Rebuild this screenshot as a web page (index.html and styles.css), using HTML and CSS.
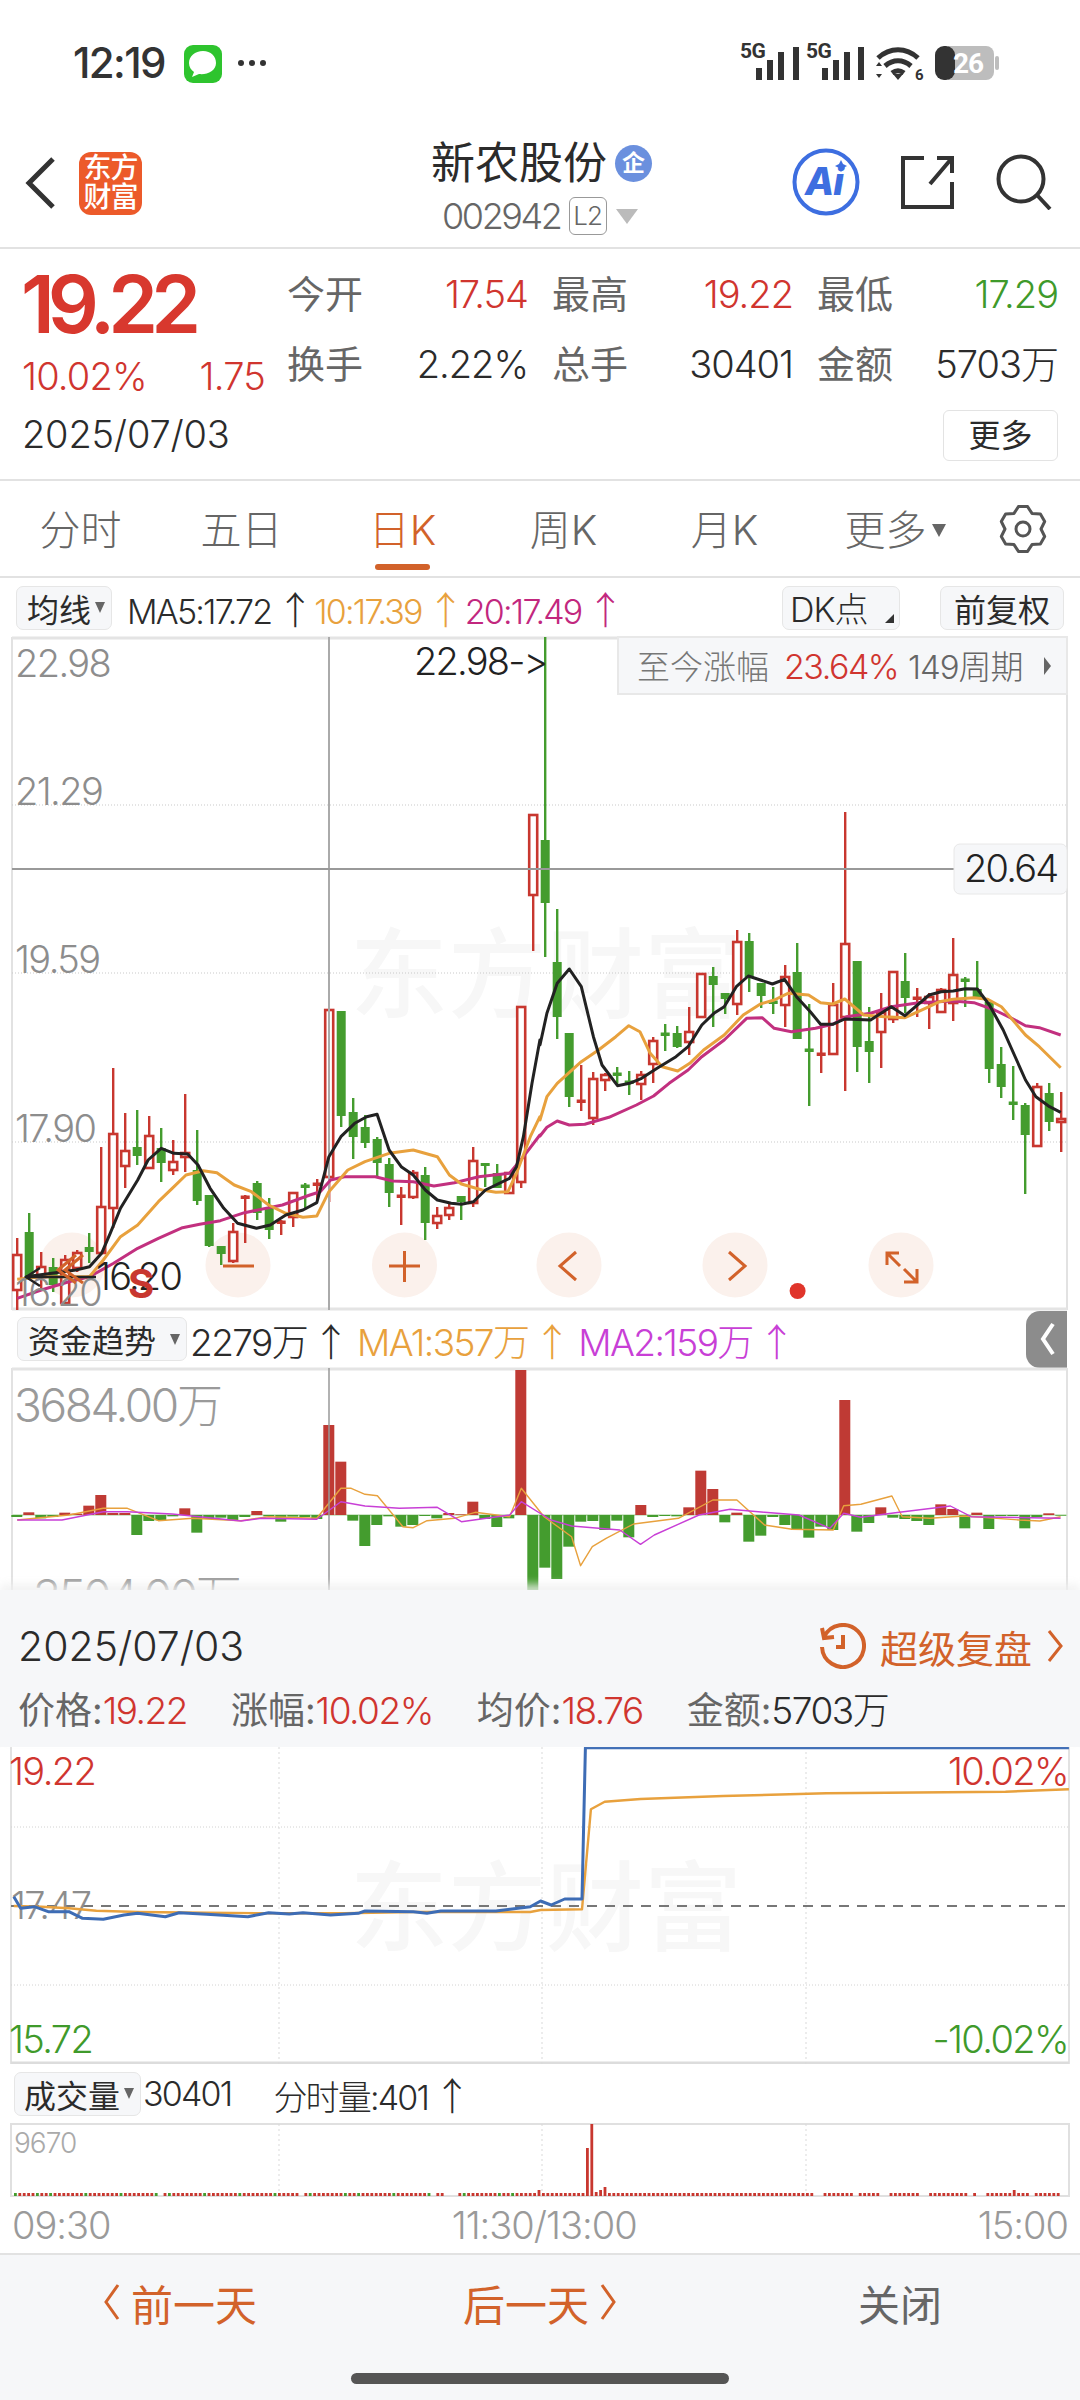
FILE: index.html
```html
<!DOCTYPE html>
<html lang="zh-CN">

<head>
    <meta charset="UTF-8">
    <title>新农股份 日K</title>
    <link rel="stylesheet" href="styles.css">
</head>

<body>
    <div class="status-bar">
        <div class="status-left">
            <span class="clock">12:19</span>
            <svg class="msg-icon" viewBox="0 0 38 38">
                <rect width="38" height="38" rx="9" fill="#2ec42e" />
                <path d="M19 6c-8 0-14 5-14 12 0 4 2 7 5 9l-2 5 7-3c8 1 17-3 17-11C32 11 27 6 19 6z" fill="#fff" />
            </svg>
            <span class="more-dots"><i></i><i></i><i></i></span>
        </div>
        <div class="status-right">
            <svg width="262" height="60" viewBox="0 -10 262 60">
                <text class="net" x="0" y="16">5G</text>
                <path d="M16 26h6v12h-6zM27 18h6v20h-6zM38 10h6v28h-6zM53 5h6v33h-6z" fill="#333" />
                <text class="net" x="66" y="16">5G</text>
                <path d="M82 26h6v12h-6zM93 18h6v20h-6zM104 10h6v28h-6zM118 5h6v33h-6z" fill="#333" />
                <path d="M138 16c12-11 28-11 40 0M145 24c8-7 18-7 26 0M152 31c4-3 8-3 12 0" fill="none" stroke="#333" stroke-width="5" />
                <path d="M153 32h10l-5 6zM136 24l3-4 3 4zM136 32l3 4 3-4z" fill="#333" />
                <text class="net small" x="175" y="38">6</text>
                <path d="M208 4h38a8 8 0 0 1 8 8v18a8 8 0 0 1-8 8h-38z" fill="#bdbdbd" />
                <rect x="195" y="4" width="20" height="34" rx="9" fill="#333" />
                <rect x="255" y="14" width="4" height="14" rx="2" fill="#bdbdbd" />
                <text class="batt" x="228" y="31">26</text>
            </svg>
        </div>
    </div>

    <div class="nav-bar">
        <div class="nav-left">
            <svg width="36" height="54" viewBox="0 0 36 54">
                <path d="M31 3L7 27l24 24" fill="none" stroke="#333" stroke-width="5" />
            </svg>
            <div class="app-logo">东方<br>财富</div>
        </div>
        <div class="nav-title">
            <div class="stock-name">新农股份<span class="ent-badge">企</span></div>
            <div class="stock-code">002942<span class="l2-tag">L2</span><span class="tri-down"></span></div>
        </div>
        <div class="nav-right">
            <svg width="68" height="68" viewBox="0 0 68 68">
                <circle cx="34" cy="34" r="31.5" fill="#fff" stroke="#3d6ee0" stroke-width="4" />
                <text class="ai-text" x="13" y="47">Ai</text>
                <path d="M49 12l2 4 4 2-4 2-2 4-2-4-4-2 4-2z" fill="#3d6ee0" />
            </svg>
            <svg width="54" height="54" viewBox="0 0 54 54">
                <path d="M23 3H2v49h49V27M29 29L51 3M36 3h15v15" fill="none" stroke="#333" stroke-width="4" />
            </svg>
            <svg width="56" height="56" viewBox="0 0 56 56">
                <circle cx="25" cy="25" r="22.5" fill="none" stroke="#333" stroke-width="4" />
                <path d="M41 41l13 14" stroke="#333" stroke-width="4" />
            </svg>
        </div>
    </div>

    <div class="quote">
        <div class="quote-left">
            <div class="price">19.22</div>
            <div class="change"><span>10.02%</span><span>1.75</span></div>
            <div class="quote-date">2025/07/03</div>
        </div>
        <div class="quote-right">
            <div class="stat-grid">
                <div class="stat"><span class="stat-label">今开</span><span class="up">17.54</span></div>
                <div class="stat"><span class="stat-label">最高</span><span class="up">19.22</span></div>
                <div class="stat"><span class="stat-label">最低</span><span class="down">17.29</span></div>
                <div class="stat"><span class="stat-label">换手</span><span>2.22%</span></div>
                <div class="stat"><span class="stat-label">总手</span><span>30401</span></div>
                <div class="stat"><span class="stat-label">金额</span><span>5703万</span></div>
            </div>
            <div class="more-btn">更多</div>
        </div>
    </div>

    <div class="tabs">
        <div class="tab">分时</div>
        <div class="tab">五日</div>
        <div class="tab active">日K</div>
        <div class="tab">周K</div>
        <div class="tab">月K</div>
        <div class="tab">更多<span class="tab-tri"></span></div>
        <div class="tab-gear">
            <svg width="48" height="48" viewBox="0 0 48 48">
                <path d="M19.6 1.4h8.8L33 8.4l8.4.5 4.3 7.6L42 24l3.7 7.5-4.3 7.6-8.4.5-4.6 7h-8.8l-4.6-7-8.4-.5-4.3-7.6L6 24l-3.7-7.5 4.3-7.6 8.4-.5z" fill="none" stroke="#555" stroke-width="3" stroke-linejoin="round" />
                <circle cx="24" cy="24" r="7" fill="none" stroke="#555" stroke-width="3" />
            </svg>
        </div>
    </div>

    <div class="legend legend-ma">
        <div class="pick">均线<span class="pick-tri"></span></div>
        <span class="ma-text">MA5:17.72<span class="arr">↑</span></span>
        <span class="ma-text orange">10:17.39<span class="arr">↑</span></span>
        <span class="ma-text pink">20:17.49<span class="arr">↑</span></span>
        <div class="legend-btns">
            <div class="pick pick-dk">DK点<span class="corner-tri"></span></div>
            <div class="pick pick-fq">前复权</div>
        </div>
    </div>

    <svg id="kline" class="chart chart-open" viewBox="0 637 1080 673" width="1080" height="673"></svg>

    <div class="legend legend-flow">
        <div class="pick pick-flow">资金趋势<span class="pick-tri"></span></div>
        <span class="ma-text">2279万<span class="arr">↑</span></span>
        <span class="ma-text orange">MA1:357万<span class="arr">↑</span></span>
        <span class="ma-text violet">MA2:159万<span class="arr">↑</span></span>
        <div class="side-handle">
            <svg width="18" height="34" viewBox="0 0 18 34">
                <path d="M15 2L5 17l10 15" fill="none" stroke="#fff" stroke-width="4" />
            </svg>
        </div>
    </div>

    <svg id="flow" class="chart chart-open" viewBox="0 1368 1080 222" width="1080" height="222"></svg>

    <div class="day-panel">
        <div class="day-head">
            <span class="day-date">2025/07/03</span>
            <div class="replay">
                <svg width="46" height="46" viewBox="0 0 46 46">
                    <path d="M4 14a21 21 0 1 1-2 10M2 5l2 10 10-1M23 12v12h-7" fill="none" stroke="#d2622a" stroke-width="4" />
                </svg>
                <span>超级复盘</span>
                <svg width="18" height="34" viewBox="0 0 18 34">
                    <path d="M3 2l12 15L3 32" fill="none" stroke="#d2622a" stroke-width="3" />
                </svg>
            </div>
        </div>
        <div class="day-stats">
            <span><b>价格:</b><em class="up">19.22</em></span>
            <span><b>涨幅:</b><em class="up">10.02%</em></span>
            <span><b>均价:</b><em class="up">18.76</em></span>
            <span><b>金额:</b><em>5703万</em></span>
        </div>
    </div>

    <svg id="minute" class="chart" viewBox="0 1747 1080 317" width="1080" height="317"></svg>

    <div class="legend legend-vol">
        <div class="pick pick-vol">成交量<span class="pick-tri"></span></div>
        <span class="ma-text">30401</span>
        <span class="ma-text vol-now">分时量:401<span class="arr">↑</span></span>
    </div>

    <svg id="volume" class="chart" viewBox="0 2123 1080 74" width="1080" height="74"></svg>

    <div class="time-axis">
        <span>09:30</span>
        <span>11:30/13:00</span>
        <span>15:00</span>
    </div>

    <div class="footer">
        <div class="footer-row">
            <div class="foot-btn">
                <svg width="18" height="38" viewBox="0 0 18 38"><path d="M15 2L3 19l12 17" fill="none" stroke="#d2622a" stroke-width="3" /></svg>
                前一天
            </div>
            <div class="foot-btn">
                后一天
                <svg width="18" height="38" viewBox="0 0 18 38"><path d="M3 2l12 17L3 36" fill="none" stroke="#d2622a" stroke-width="3" /></svg>
            </div>
            <div class="foot-btn foot-close">关闭</div>
        </div>
        <div class="home-bar"></div>
    </div>

    <script src="chart.js"></script>
</body>

</html>
```

FILE: styles.css
```css
* {
    box-sizing: border-box;
}

body {
    margin: 0;
    width: 1080px;
    height: 2400px;
    overflow: hidden;
    background-color: #fff;
    color: #2b2b2b;
    font-family: Inter, "Noto Sans CJK SC", sans-serif;
    font-size: 36px;
}

.up {
    color: #d0352f;
}

.down {
    color: #3f9a2b;
}

/* status bar */

.status-bar {
    height: 125px;
    padding: 45px 78px 0 73px;
    display: flex;
    justify-content: space-between;
}

.status-left {
    display: flex;
    align-items: flex-start;
}

.clock {
    font-size: 42px;
    font-weight: 500;
    line-height: 36px;
    letter-spacing: -1.6px;
    color: #333;
    width: 111px;
}

.msg-icon {
    width: 38px;
    height: 38px;
}

.more-dots {
    display: flex;
    gap: 5px;
    margin: 15px 0 0 16px;
}

.more-dots i {
    width: 6px;
    height: 6px;
    border-radius: 50%;
    background-color: #333;
}

.status-right {
    margin-top: -13px;
    height: 60px;
}

.net {
    font-family: Roboto, sans-serif;
    font-size: 21px;
    font-weight: 700;
    fill: #333;
    letter-spacing: -.5px;
}

.net.small {
    font-size: 15px;
}

.batt {
    font-family: Roboto, sans-serif;
    font-size: 28px;
    font-weight: 700;
    fill: #fff;
    text-anchor: middle;
    letter-spacing: -1px;
}

/* nav */

.nav-bar {
    height: 124px;
    display: grid;
    grid-template-columns: 1fr auto 1fr;
    border-bottom: 2px solid #e2e2e2;
}

.nav-left {
    display: flex;
    align-items: center;
    gap: 21px;
    padding: 0 0 6px 22px;
}

.app-logo {
    width: 63px;
    height: 63px;
    padding-top: 2px;
    border-radius: 12px;
    background-color: #ec5a2a;
    color: #fff;
    font-size: 28px;
    font-weight: 500;
    line-height: 29px;
    text-align: center;
    letter-spacing: -1px;
}

.nav-title {
    padding-top: 11px;
    margin-left: 3px;
}

.stock-name {
    display: flex;
    align-items: center;
    gap: 8px;
    font-size: 44px;
    line-height: 54px;
    color: #2b2b2b;
}

.ent-badge {
    width: 37px;
    height: 37px;
    border-radius: 50%;
    background-color: #6b90de;
    color: #fff;
    font-size: 23px;
    font-weight: 700;
    line-height: 37px;
    text-align: center;
}

.stock-code {
    display: flex;
    align-items: center;
    margin: 6px 0 0 11px;
    font-size: 36px;
    font-weight: 300;
    line-height: 40px;
    color: #666;
    letter-spacing: -2.4px;
}

.l2-tag {
    width: 38px;
    height: 38px;
    margin-left: 8px;
    border: 1.5px solid #999;
    border-radius: 6px;
    font-size: 26px;
    line-height: 35px;
    text-align: center;
    letter-spacing: -1px;
}

.tri-down {
    width: 0;
    height: 0;
    margin-left: 9px;
    border-left: 11px solid transparent;
    border-right: 11px solid transparent;
    border-top: 15px solid #bbb;
}

.nav-right {
    display: flex;
    align-items: center;
    justify-content: flex-end;
    padding: 0 28px 8px 0;
    gap: 41px;
}

.ai-text {
    font-size: 38px;
    font-weight: 800;
    font-style: italic;
    fill: #3d6ee0;
    letter-spacing: -1px;
}

/* quote block */

.quote {
    height: 232px;
    padding: 15px 22px 0 24px;
    display: flex;
    gap: 24px;
    border-bottom: 2px solid #e2e2e2;
}

.quote-left {
    width: 241px;
}

.price {
    font-size: 80px;
    font-weight: 600;
    line-height: 80px;
    letter-spacing: -7px;
    margin-left: -3px;
    color: #d8382e;
}

.change {
    display: flex;
    justify-content: space-between;
    margin: 10px 0 0 -2px;
    font-size: 38px;
    font-weight: 300;
    line-height: 44px;
    letter-spacing: -.8px;
    color: #d0352f;
}

.quote-date {
    margin: 14px 0 0 -2px;
    font-size: 38px;
    font-weight: 300;
    line-height: 44px;
    letter-spacing: -.2px;
}

.quote-right {
    flex: 1;
    padding-top: 9px;
}

.stat-grid {
    display: grid;
    grid-template-columns: repeat(3, 241px);
    column-gap: 24px;
    row-gap: 28px;
    margin-left: -2px;
}

.stat {
    display: flex;
    justify-content: space-between;
    line-height: 42px;
    font-size: 38px;
    font-weight: 300;
    letter-spacing: -1px;
}

.stat-label {
    color: #666;
    font-size: 38px;
    font-weight: 400;
    letter-spacing: 0;
}

.more-btn {
    width: 115px;
    height: 51px;
    margin: 25px 0 0 auto;
    border: 1px solid #e3e3e3;
    border-radius: 6px;
    font-size: 32px;
    line-height: 49px;
    text-align: center;
}

/* period tabs */

.tabs {
    height: 97px;
    padding-top: 24px;
    display: grid;
    grid-template-columns: repeat(6, 161px) 1fr;
    border-bottom: 2px solid #e2e2e2;
}

.tab {
    display: flex;
    flex-direction: column;
    align-items: center;
    font-size: 41px;
    line-height: 50px;
    color: #666;
    font-weight: 300;
    position: relative;
}

.tab::after {
    content: "";
    width: 55px;
    height: 6px;
    margin-top: 9px;
    border-radius: 3px;
}

.tab.active {
    color: #d2622a;
}

.tab.active::after {
    background-color: #d2622a;
}

.tab-tri {
    position: absolute;
    top: 19px;
    right: 20px;
    border-left: 7px solid transparent;
    border-right: 7px solid transparent;
    border-top: 13px solid #666;
}

.tab-gear {
    text-align: center;
}

/* legend rows above each chart */

.legend {
    display: flex;
    align-items: center;
}

.legend-ma {
    height: 59px;
    padding: 0 16px;
}

.legend-flow {
    height: 58px;
    padding-left: 17px;
}

.legend-vol {
    height: 59px;
    padding-left: 14px;
}

.pick {
    height: 44px;
    display: flex;
    align-items: center;
    padding: 0 6px 0 10px;
    border: 1px solid #e6e6e6;
    border-radius: 7px;
    background-color: #f6f7f9;
    font-size: 32px;
    color: #2b2b2b;
}

.pick-tri {
    margin: 0 0 0 4px;
    border-left: 5px solid transparent;
    border-right: 5px solid transparent;
    border-top: 11px solid #666;
}

.pick-flow .pick-tri {
    margin-left: 14px;
}

.ma-text {
    margin-left: 15px;
    font-size: 34px;
    font-weight: 300;
    letter-spacing: -1.8px;
    white-space: nowrap;
}

.legend-ma .ma-text + .ma-text {
    margin-left: 0;
}

.arr {
    font-family: "Noto Sans CJK SC", sans-serif;
    font-size: 38px;
    margin-left: 5px;
    letter-spacing: 0;
}

.orange {
    color: #e8a13d;
}

.pink {
    color: #c2277e;
}

.violet {
    color: #c83fd6;
}

.legend-btns {
    margin-left: auto;
    display: flex;
    gap: 40px;
}

.pick-dk {
    width: 118px;
    position: relative;
    padding-left: 7px;
    letter-spacing: -1px;
    font-size: 34px;
    font-weight: 300;
}

.corner-tri {
    position: absolute;
    right: 5px;
    bottom: 6px;
    border-left: 9px solid transparent;
    border-bottom: 9px solid #333;
}

.pick-fq {
    width: 124px;
    justify-content: center;
    padding: 0;
}

.legend-flow .ma-text {
    margin-left: 7px;
    font-size: 37px;
    letter-spacing: -1.6px;
}

.legend-flow .ma-text:nth-of-type(1) {
    margin-left: 3px;
}

.side-handle {
    width: 41px;
    height: 57px;
    margin-left: auto;
    margin-right: 13px;
    border-radius: 14px 0 0 14px;
    background-color: #8c8c8c;
    display: flex;
    align-items: center;
    justify-content: center;
}

.pick-vol {
    padding-left: 9px;
}

.legend-vol .ma-text:nth-of-type(1) {
    margin-left: 2px;
}

.legend-vol .vol-now {
    margin-left: 42px;
}

/* svg charts */

.chart {
    display: block;
}

.chart-open {
    overflow: visible;
}

.chart text {
    font-family: Inter, "Noto Sans CJK SC", sans-serif;
    font-weight: 300;
}

.axis {
    font-size: 38px;
    fill: #8d8d8d;
    letter-spacing: -1.6px;
}

.axis-dark {
    font-size: 38px;
    fill: #222;
    letter-spacing: -1.8px;
}

.chart .mark {
    font-size: 98px;
    font-weight: 500;
    fill: #f7f7f7;
}

.sum-gray {
    font-size: 33px;
    fill: #777;
}

.sum-red {
    font-size: 34px;
    fill: #d0352f;
    letter-spacing: -1.5px;
}

.sum-dark {
    font-size: 33px;
    fill: #666;
    letter-spacing: -1px;
}

.chart .flag-s {
    font-size: 40px;
    font-weight: 700;
    fill: #c8372f;
}

.axis-big {
    font-size: 46px;
    fill: #9a9a9a;
    letter-spacing: -2.4px;
}

.axis-red {
    font-size: 38px;
    fill: #d0352f;
    letter-spacing: -1.6px;
}

.axis-green {
    font-size: 38px;
    fill: #3f9a2b;
    letter-spacing: -1.6px;
}

.axis-small {
    font-size: 28px;
    fill: #aaa;
    letter-spacing: -1px;
}

/* day detail sheet */

.day-panel {
    height: 157px;
    padding: 31px 16px 0 18px;
    background-color: #f6f7f9;
    box-shadow: 0 -6px 8px rgba(240, 240, 240, .8);
    position: relative;
}

.day-head {
    display: flex;
    justify-content: space-between;
    align-items: center;
    height: 50px;
}

.day-date {
    font-size: 41px;
    font-weight: 300;
    letter-spacing: 0;
}

.replay {
    display: flex;
    align-items: center;
    gap: 14px;
    color: #d2622a;
    font-size: 38px;
}

.day-stats {
    display: flex;
    gap: 44px;
    margin-top: 20px;
    font-size: 37px;
    font-weight: 300;
    line-height: 40px;
    letter-spacing: -1.5px;
}

.day-stats b {
    font-weight: 400;
    color: #666;
    letter-spacing: 0;
}

.day-stats em {
    font-style: normal;
}

/* time axis + footer */

.time-axis {
    height: 56px;
    padding: 0 12px;
    display: flex;
    justify-content: space-between;
    align-items: center;
    font-size: 38px;
    font-weight: 300;
    color: #9a9a9a;
    letter-spacing: -1px;
}

.footer {
    height: 147px;
    border-top: 2px solid #e2e2e2;
    background-color: #f6f7f9;
    display: flex;
    flex-direction: column;
    align-items: center;
}

.footer-row {
    width: 100%;
    height: 116px;
    padding-top: 23px;
    display: grid;
    grid-template-columns: 360px 360px 360px;
    font-size: 42px;
}

.foot-btn {
    display: flex;
    align-items: center;
    justify-content: center;
    gap: 10px;
    height: 48px;
    color: #d2622a;
}

.foot-close {
    color: #666;
}

.home-bar {
    width: 378px;
    height: 11px;
    margin-top: 2px;
    border-radius: 6px;
    background-color: #555;
}
```

FILE: chart.js
```js
var RED = '#c8372f';
var GREEN = '#449c2e';
var ORANGE = '#e8a13d';
var ACCENT = '#d2622a';

// high, body top, body bottom, low, colour
var candles = [
    [1238, 1255, 1290, 1310, 'r'], [1213, 1232, 1277, 1280, 'g'], [1252, 1267, 1277, 1290, 'r'], [1258, 1267, 1285, 1292, 'g'],
    [1255, 1260, 1303, 1303, 'r'], [1250, 1253, 1268, 1272, 'r'], [1233, 1247, 1252, 1263, 'g'], [1147, 1207, 1253, 1253, 'r'],
    [1068, 1134, 1208, 1228, 'r'], [1113, 1151, 1166, 1188, 'r'], [1110, 1147, 1156, 1165, 'g'], [1116, 1136, 1168, 1168, 'r'],
    [1128, 1148, 1163, 1182, 'g'], [1140, 1162, 1170, 1175, 'r'], [1094, 1153, 1157, 1172, 'r'], [1130, 1170, 1201, 1205, 'g'],
    [1195, 1195, 1246, 1247, 'g'], [1246, 1246, 1254, 1265, 'g'], [1223, 1232, 1261, 1263, 'r'], [1195, 1197, 1197, 1243, 'r'],
    [1181, 1183, 1213, 1220, 'g'], [1198, 1208, 1230, 1239, 'g'], [1220, 1222, 1222, 1235, 'r'], [1193, 1193, 1217, 1227, 'r'],
    [1183, 1186, 1186, 1208, 'g'], [1179, 1184, 1184, 1200, 'r'], [1010, 1010, 1177, 1202, 'r'], [1011, 1011, 1116, 1127, 'g'],
    [1098, 1112, 1137, 1159, 'g'], [1115, 1127, 1143, 1148, 'g'], [1137, 1139, 1163, 1177, 'g'], [1158, 1164, 1193, 1207, 'g'],
    [1187, 1196, 1196, 1225, 'r'], [1170, 1173, 1197, 1199, 'r'], [1167, 1175, 1223, 1240, 'g'], [1207, 1216, 1223, 1229, 'r'],
    [1203, 1208, 1215, 1220, 'r'], [1196, 1196, 1202, 1220, 'g'], [1147, 1161, 1203, 1207, 'r'], [1163, 1163, 1166, 1187, 'g'],
    [1164, 1173, 1188, 1188, 'g'], [1173, 1173, 1193, 1193, 'r'], [1007, 1007, 1182, 1188, 'r'], [815, 815, 895, 951, 'r'],
    [637, 840, 903, 957, 'g'], [909, 962, 1017, 1039, 'g'], [1033, 1033, 1097, 1107, 'g'], [1065, 1101, 1101, 1111, 'r'],
    [1072, 1079, 1118, 1125, 'r'], [1073, 1075, 1080, 1091, 'r'], [1067, 1074, 1074, 1085, 'g'], [1071, 1082, 1082, 1095, 'g'],
    [1071, 1075, 1084, 1100, 'r'], [1037, 1041, 1064, 1083, 'r'], [1024, 1034, 1034, 1051, 'g'], [1026, 1033, 1047, 1048, 'g'],
    [1007, 1032, 1042, 1055, 'r'], [974, 974, 1017, 1017, 'r'], [967, 976, 985, 1027, 'g'], [993, 993, 999, 1014, 'g'],
    [930, 942, 1004, 1015, 'r'], [933, 941, 977, 992, 'g'], [983, 983, 996, 1008, 'g'], [987, 1002, 1002, 1014, 'g'],
    [965, 977, 1005, 1027, 'r'], [943, 972, 1039, 1039, 'g'], [1004, 1050, 1050, 1106, 'g'], [1025, 1054, 1054, 1073, 'r'],
    [983, 1005, 1054, 1054, 'r'], [812, 944, 1017, 1091, 'r'], [961, 961, 1047, 1072, 'g'], [1007, 1041, 1052, 1083, 'g'],
    [993, 1013, 1032, 1068, 'r'], [972, 972, 1019, 1023, 'r'], [953, 981, 998, 1013, 'g'], [988, 998, 998, 1017, 'r'],
    [993, 997, 1003, 1029, 'r'], [988, 990, 1012, 1013, 'r'], [938, 975, 1003, 1021, 'r'], [977, 980, 980, 1007, 'g'],
    [961, 989, 997, 997, 'g'], [1002, 1002, 1069, 1083, 'g'], [1047, 1064, 1087, 1098, 'g'], [1066, 1103, 1103, 1120, 'g'],
    [1103, 1105, 1135, 1194, 'g'], [1083, 1087, 1146, 1146, 'r'], [1083, 1093, 1122, 1131, 'g'], [1092, 1119, 1122, 1152, 'r']
];

// line points read off the chart in two halves; cropA is the left half, cropB the right
var maBlackA = [[75, 1190], [150, 1180], [220, 1170], [260, 1160], [295, 1120], [320, 1060], [350, 985], [400, 900], [430, 840], [468, 805], [505, 820], [545, 822], [575, 855], [610, 925], [650, 985], [690, 1030], [745, 1045], [785, 1035], [830, 1005], [880, 990], [920, 968], [940, 890], [955, 830], [990, 770], [1030, 730], [1065, 710], [1095, 703], [1130, 810], [1165, 860], [1200, 885], [1235, 930], [1270, 960], [1310, 970], [1340, 973], [1375, 965], [1410, 930], [1480, 895], [1500, 860], [1520, 770], [1545, 610], [1568, 480]];
var maBlackB = [[0, 495], [20, 400], [50, 310], [85, 267], [120, 320], [155, 470], [180, 555], [225, 617], [260, 610], [295, 595], [340, 565], [395, 530], [430, 500], [470, 435], [505, 400], [535, 380], [570, 320], [605, 288], [640, 300], [675, 312], [710, 298], [745, 350], [785, 395], [815, 433], [850, 433], [885, 417], [960, 420], [1020, 380], [1060, 407], [1130, 345], [1165, 335], [1200, 333], [1235, 326], [1270, 327], [1305, 375], [1345, 450], [1410, 600], [1440, 650], [1480, 680], [1512, 697]];
var maOrangeA = [[50, 1198], [120, 1190], [200, 1190], [260, 1190], [300, 1140], [350, 1070], [400, 1035], [460, 965], [500, 925], [540, 885], [590, 872], [630, 878], [680, 915], [730, 935], [780, 975], [830, 1000], [880, 1012], [920, 1008], [955, 935], [1010, 870], [1060, 845], [1130, 820], [1200, 810], [1270, 830], [1305, 885], [1340, 912], [1400, 930], [1440, 937], [1475, 935], [1500, 880], [1540, 770], [1568, 710]];
var maOrangeB = [[0, 720], [20, 650], [50, 610], [120, 545], [170, 510], [220, 470], [258, 437], [290, 455], [320, 520], [355, 560], [400, 573], [435, 550], [475, 510], [535, 465], [590, 405], [640, 372], [680, 360], [720, 340], [780, 345], [815, 368], [850, 372], [885, 357], [940, 405], [1000, 410], [1060, 413], [1130, 380], [1160, 365], [1200, 358], [1260, 353], [1300, 358], [1340, 380], [1410, 465], [1450, 500], [1512, 563]];
var maPinkA = [[50, 1255], [120, 1230], [200, 1205], [260, 1190], [330, 1150], [400, 1105], [460, 1075], [530, 1043], [580, 1033], [640, 1022], [710, 998], [820, 975], [900, 945], [930, 935], [960, 900], [1000, 890], [1090, 890], [1140, 903], [1200, 905], [1260, 918], [1320, 908], [1390, 890], [1480, 880], [1520, 830], [1568, 765]];
var maPinkB = [[0, 768], [20, 742], [50, 723], [85, 735], [130, 733], [200, 712], [280, 675], [330, 648], [375, 610], [430, 570], [470, 530], [535, 480], [600, 415], [645, 413], [680, 445], [730, 455], [800, 445], [850, 433], [890, 410], [960, 400], [1020, 380], [1100, 368], [1200, 363], [1260, 368], [1320, 390], [1370, 415], [1410, 437], [1450, 443], [1512, 465]];

// capital flow, bar height per candle (3x scale)
var flowBars = [-6, 8, -10, -6, 7, 4, 28, 60, 6, 6, -60, -18, -16, -4, 20, -53, -12, -8, -15, -6, 12, -4, -20, -5, -6, -12, 270, 160, -17, -93, -30, -4, -35, -30, -3, -10, 6, 2, 40, -12, -36, -10, 435, -225, -158, -192, -95, -20, -18, -45, -17, -67, 30, -6, -3, -4, 23, 133, 78, -22, 7, -80, -62, -6, -30, -45, -68, -35, -45, 345, -50, -24, 23, -8, -12, -18, -30, 32, 18, -40, 7, -42, -3, -3, -40, -6, 5, -2];
var flowOrange = [[25, 660], [100, 645], [150, 625], [185, 625], [230, 662], [280, 655], [350, 662], [390, 650], [460, 655], [495, 565], [510, 565], [530, 583], [548, 587], [585, 680], [600, 683], [620, 662], [660, 655], [690, 637], [740, 650], [757, 565], [790, 650], [830, 710], [843, 797], [860, 740], [880, 715], [920, 672], [985, 655], [1035, 600], [1070, 600], [1110, 675], [1150, 688], [1210, 690], [1225, 617], [1250, 613], [1295, 588], [1310, 650], [1350, 655], [1400, 648], [1480, 660], [1510, 663], [1540, 650]];
var flowPurple = [[25, 660], [90, 660], [150, 635], [185, 635], [250, 642], [350, 663], [380, 655], [460, 658], [495, 605], [530, 618], [580, 625], [635, 622], [670, 665], [740, 645], [757, 605], [800, 660], [830, 678], [900, 690], [930, 733], [950, 705], [1015, 645], [1060, 628], [1110, 637], [1160, 645], [1205, 685], [1225, 640], [1250, 652], [1300, 638], [1380, 618], [1410, 650], [1540, 655]];

var minBlue = [[20, 890], [30, 925], [50, 920], [70, 935], [100, 935], [120, 955], [150, 958], [180, 945], [200, 940], [240, 950], [260, 938], [300, 943], [360, 950], [390, 938], [420, 942], [440, 938], [480, 945], [520, 940], [530, 933], [600, 935], [620, 940], [640, 933], [720, 933], [770, 920], [785, 903], [800, 915], [820, 897], [845, 897], [850, 443], [1552, 443]];
var minOrange = [[20, 918], [60, 920], [100, 925], [140, 932], [200, 936], [300, 938], [400, 940], [500, 940], [600, 936], [770, 936], [785, 930], [845, 928], [858, 628], [878, 605], [930, 597], [1050, 588], [1200, 580], [1460, 575], [1552, 568]];

function cropA(p) { return (p[0] / 2.904).toFixed(1) + ',' + (880 + p[1] / 3).toFixed(1); }
function cropB(p) { return (540 + p[0] / 2.904).toFixed(1) + ',' + (880 + p[1] / 3).toFixed(1); }
function cropFlow(p) { return (p[0] / 1.452).toFixed(1) + ',' + (1300 + p[1] / 3).toFixed(1); }
function cropMin(p) { return (p[0] / 1.452).toFixed(1) + ',' + (1600 + p[1] / 3).toFixed(1); }

function line(points, color, width) {
    return '<polyline points="' + points.join(' ') + '" fill="none" stroke="' + color + '" stroke-width="' + width + '" stroke-linejoin="round"/>';
}

function seg(x1, y1, x2, y2, color, width, extra) {
    return '<line x1="' + x1 + '" y1="' + y1 + '" x2="' + x2 + '" y2="' + y2 + '" stroke="' + color + '" stroke-width="' + width + '" ' + (extra || '') + '/>';
}

function box(x, y, w, h, fill, extra) {
    return '<rect x="' + x + '" y="' + y + '" width="' + w + '" height="' + h + '" fill="' + fill + '" ' + (extra || '') + '/>';
}

function label(x, y, cls, str, anchor) {
    return '<text class="' + cls + '" x="' + x + '" y="' + y + '"' + (anchor ? ' text-anchor="' + anchor + '"' : '') + '>' + str + '</text>';
}

function watermark(y) {
    return label(350, y, 'mark', '东方财富');
}

function drawKline() {
    var s = '';
    s += watermark(1010);
    s += seg(12, 637, 12, 1310, '#e2e2e2', 2) + seg(1067, 637, 1067, 1310, '#e2e2e2', 2);
    s += seg(12, 638, 1067, 638, '#e4e4e4', 3) + seg(12, 1309, 1067, 1309, '#e4e4e4', 3);
    [805, 973, 1142].forEach(function (y) {
        s += seg(12, y, 1067, y, '#c9c9c9', 1, 'stroke-dasharray="1 2"');
    });
    s += label(15, 677, 'axis', '22.98') + label(15, 805, 'axis', '21.29') + label(15, 973, 'axis', '19.59') + label(15, 1142, 'axis', '17.90');

    // action circles sit under the candles
    [72, 238, 404.5, 569, 735, 901].forEach(function (x) {
        s += '<circle cx="' + x + '" cy="1265" r="32.5" fill="#fbf1ec"/>';
    });

    candles.forEach(function (c, i) {
        var x = +(17.2 + 12 * i).toFixed(1);
        var color = c[4] == 'r' ? RED : GREEN;
        s += seg(x, c[0], x, c[3], color, 2.4);
        if (c[1] == c[2]) {
            s += box(x - 4.5, c[1] - 1.5, 9, 3.5, color);
        } else if (c[4] == 'r') {
            s += box(x - 4, c[1], 8, c[2] - c[1], '#fff', 'stroke="' + RED + '" stroke-width="2.6"');
        } else {
            s += box(x - 4.5, c[1], 9, c[2] - c[1], color);
        }
    });

    s += seg(329, 637, 329, 1310, '#aaa', 2) + seg(12, 869, 954, 869, '#999', 2);

    s += line(maPinkA.map(cropA).concat(maPinkB.map(cropB)), '#c2307f', 3);
    s += line(maOrangeA.map(cropA).concat(maOrangeB.map(cropB)), ORANGE, 3);
    s += line(maBlackA.map(cropA).concat(maBlackB.map(cropB)), '#222', 3);

    // chart overlays
    s += label(414, 675, 'axis-dark', '22.98-&gt;');
    s += box(618, 637, 449, 57, '#f6f7f9', 'stroke="#e8e8e8" stroke-width="2"');
    s += label(637, 679, 'sum-gray', '至今涨幅') + label(784, 679, 'sum-red', '23.64%') + label(908, 679, 'sum-dark', '149周期');
    s += '<path d="M1044 657l7 9-7 9z" fill="#666"/>';
    s += box(954, 844, 113, 50, '#f6f7f9', 'stroke="#e8e8e8" stroke-width="1" rx="6"');
    s += label(964, 882, 'axis-dark', '20.64');

    s += label(15, 1306, 'axis', '16.20');
    s += '<path d="M40 1268L26 1277l14 9M26 1277h70" fill="none" stroke="#222" stroke-width="2.4"/>';
    s += label(96, 1290, 'axis-dark', '16.20');
    s += label(128, 1298, 'flag-s', 'S');

    s += '<g fill="none" stroke="' + ACCENT + '" stroke-width="3">';
    s += '<path d="M76 1255L58 1270l18 13M83 1255L65 1270l18 13"/>';
    s += '<path d="M223 1266h31M389 1266h31M404.5 1251v31"/>';
    s += '<path d="M576 1252L560 1266l16 14M729 1252l16 14-16 14"/>';
    s += '<path d="M899 1253h-12v12M887 1253l13 13M904 1282h13v-13M917 1282l-13-13"/>';
    s += '</g>';
    s += '<circle cx="797.6" cy="1291" r="8" fill="#e0352b"/>';
    document.getElementById('kline').innerHTML = s;
}

function drawFlow() {
    var s = '';
    s += seg(12, 1368, 12, 1590, '#e2e2e2', 2) + seg(1067, 1368, 1067, 1590, '#e2e2e2', 2) + seg(12, 1369, 1067, 1369, '#e4e4e4', 3);
    s += label(14, 1422, 'axis-big', '3684.00万');
    s += label(15, 1613, 'axis-big', '-3504.00万');
    s += seg(12, 1515, 1067, 1515, '#cfe6c8', 2);
    flowBars.forEach(function (v, i) {
        var x = 11.3 + 12 * i;
        var h = Math.abs(v) / 3;
        s += box(x.toFixed(1), v > 0 ? 1515 - h : 1515, 11, h, v > 0 ? '#bf3a34' : GREEN);
    });
    s += line(flowOrange.map(cropFlow), ORANGE, 1.4);
    s += line(flowPurple.map(cropFlow), '#c83fd6', 1.4);
    s += seg(329, 1368, 329, 1590, '#999', 1.5);
    document.getElementById('flow').innerHTML = s;
}

function drawMinute() {
    var s = '';
    s += watermark(1943);
    s += seg(11, 1747, 11, 2064, '#e2e2e2', 2) + seg(1069, 1747, 1069, 2064, '#e2e2e2', 2) + seg(11, 2063, 1069, 2063, '#dcdcdc', 3);
    [279, 542, 806].forEach(function (x) {
        s += seg(x, 1747, x, 2064, '#d9d9d9', 1, 'stroke-dasharray="2 3"');
    });
    [1827, 1985].forEach(function (y) {
        s += seg(11, y, 1069, y, '#d2d2d2', 1, 'stroke-dasharray="1 2"');
    });
    s += seg(11, 1906, 1065, 1906, '#777', 2, 'stroke-dasharray="10 8"');
    s += label(11, 1919, 'axis', '17.47');
    s += line(minOrange.map(cropMin), ORANGE, 2.4);
    s += line(minBlue.map(cropMin), '#3d6cb5', 3);
    s += label(9, 1785, 'axis-red', '19.22') + label(1068, 1785, 'axis-red', '10.02%', 'end');
    s += label(9, 2053, 'axis-green', '15.72') + label(1068, 2053, 'axis-green', '-10.02%', 'end');
    document.getElementById('minute').innerHTML = s;
}

function drawVolume() {
    var s = box(11, 2124, 1058, 72, '#fff', 'stroke="#e0e0e0" stroke-width="2"');
    [279, 542, 806].forEach(function (x) {
        s += seg(x, 2124, x, 2196, '#d9d9d9', 1, 'stroke-dasharray="2 3"');
    });
    s += label(14, 2153, 'axis-small', '9670');
    // tall prints around the 13:00 open, everything else is a small tick
    var tall = { 585: 2148, 590: 2124, 595: 2192, 599: 2190, 603: 2187, 537: 2190, 1011: 2190 };
    var gaps = [[157, 162], [300, 304], [431, 435], [443, 456], [814, 820], [851, 857], [880, 886], [920, 926], [966, 970], [974, 984], [1030, 1034], [1059, 1066]];
    for (var x = 14; x < 1068; x += 4.4) {
        var skip = gaps.some(function (g) { return x >= g[0] && x < g[1]; });
        if (skip) continue;
        var top = 2193;
        Object.keys(tall).forEach(function (k) {
            if (Math.abs(x - k) < 2.2) top = tall[k];
        });
        var green = x < 540 && Math.floor(x) % 7 == 0;
        s += box(x.toFixed(1), top, 2.8, 2196 - top, green ? GREEN : RED);
    }
    document.getElementById('volume').innerHTML = s;
}

drawKline();
drawFlow();
drawMinute();
drawVolume();
```
